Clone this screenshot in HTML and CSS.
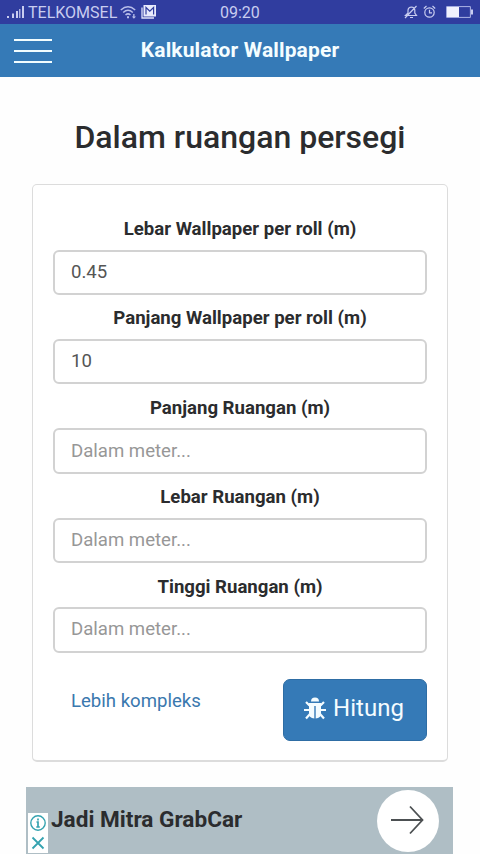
FILE: index.html
```html
<!DOCTYPE html>
<html lang="id">
<head>
<meta charset="utf-8">
<title>Kalkulator Wallpaper</title>
<link rel="stylesheet" href="styles.css">
</head>
<body>
<div class="status">
  <svg class="signal" width="19" height="14" viewBox="0 0 19 14"><path fill="#c9cdf0" d="M0 11h2v2H0zM5 8.500h2v4.500h-2zM9 6h2v7h-2zM15 1h2v12h-2z"/><path fill="#aab0e2" d="M12 4h1.500v9H12z"/></svg>
  <span class="carrier">TELKOMSEL</span>
  <svg class="wifi" width="17" height="14" viewBox="0 0 17 14" fill="none" stroke="#b9bfea" stroke-width="1.500"><path d="M.8 5Q8 -1.500 15.200 5M3.200 7.500Q8 3 12.800 7.500M5.500 10Q8 7.800 10.500 10"/><path fill="#b9bfea" stroke="none" d="M7 11.300h2v2H7zM13.200 9h1.300v2.500H16l-2.100 2.200-2-2.200h1.300z"/></svg>
  <svg class="mail" width="16" height="14" viewBox="0 0 16 14"><path d="M1 2.500v10.500h12" fill="none" stroke="#dfe2fa" stroke-width="1.300"/><path fill="#e8eafc" d="M2.500 0H15v11.500H2.500z"/><path d="M5 9.500V2.500l3.800 3.600L12.600 2.500v7" fill="none" stroke="#303d9d" stroke-width="1.200"/></svg>
  <span class="time">09:20</span>
  <svg class="bell" width="14" height="14" viewBox="0 0 14 14" fill="none" stroke="#c9cdf0" stroke-width="1.200"><path d="M1.500 10.500h11L10.800 8V5Q10.500 2.300 7.500 2 4.300 2.300 4 5v3zM6 12.500h3M1 13 12.500 1"/></svg>
  <svg class="alarm" width="13" height="14" viewBox="0 0 13 14" fill="none" stroke="#c9cdf0" stroke-width="1.200"><circle cx="6.500" cy="7.500" r="4.700"/><path d="M6.500 4.800v3H9M.8 3.500 3.500 1M9.500 1l2.700 2.500"/></svg>
  <svg class="battery" width="27" height="12" viewBox="0 0 27 12"><path d="M.6.600h23.800v10.800H.6z" fill="none" stroke="#aeb5e6"/><path d="M1 1h12v10H1z" fill="#f0f1fd"/><path d="M25 3.500h2v5h-2z" fill="#c9cdf0"/></svg>
</div>
<header class="bar">
  <div class="menu"><i></i><i></i><i></i></div>
  <h1 class="title">Kalkulator Wallpaper</h1>
</header>
<main class="main">
  <h2 class="heading">Dalam ruangan persegi</h2>
  <form class="card">
    <label class="field"><span>Lebar Wallpaper per roll (m)</span><input value="0.45"></label>
    <label class="field"><span>Panjang Wallpaper per roll (m)</span><input value="10"></label>
    <label class="field"><span>Panjang Ruangan (m)</span><input placeholder="Dalam meter..."></label>
    <label class="field"><span>Lebar Ruangan (m)</span><input placeholder="Dalam meter..."></label>
    <label class="field"><span>Tinggi Ruangan (m)</span><input placeholder="Dalam meter..."></label>
    <div class="actions">
      <a class="link">Lebih kompleks</a>
      <button class="submit" type="button">
        <svg width="22" height="23" viewBox="0 0 22 23"><path fill="#f4fcff" d="M7 4.500a4 4 0 0 1 8 0zM5 6h12v10.500q0 4.500-5.300 5V9h-1.400v12.500q-5.300-.5-5.300-5z"/><path d="M5.500 8.500 2 5M16.500 8.500 20 5M5.500 13H0M16.500 13H22M6 17l-4 4.500M16 17l4 4.500" stroke="#f4fcff" stroke-width="2.200"/></svg>
        <span>Hitung</span>
      </button>
    </div>
  </form>
</main>
<aside class="ad">
  <div class="choices">
    <svg width="18" height="18" viewBox="0 0 18 18" fill="none" stroke="#35a3b0"><circle cx="9" cy="9" r="7.200" stroke-width="1.400"/><path d="M9 4.500v2M7.500 8H9v5M7.300 13h3.500" stroke-width="1.700"/></svg>
    <svg width="18" height="18" viewBox="0 0 18 18" fill="none" stroke="#35a3b0" stroke-width="1.800"><path d="m3.500 3.500 11 11M14.500 3.500l-11 11"/></svg>
  </div>
  <span class="adtext">Jadi Mitra GrabCar</span>
  <div class="go"><svg width="34" height="30" viewBox="0 0 34 30" fill="none" stroke="#4c5052" stroke-width="1.800"><path d="M1 15h31M20 1.500 32.500 15 20 28.500"/></svg></div>
</aside>
</body>
</html>
```
FILE: styles.css
```css
* { box-sizing: border-box; }
body {
  margin: 0;
  height: 854px;
  overflow: hidden;
  background: #fefefe;
  color: #2b2c2e;
  font-family: Roboto, "Liberation Sans", sans-serif;
}
svg { display: block; flex: none; }
.status {
  display: flex;
  align-items: center;
  height: 24px;
  padding: 0 7px;
  background: #303d9f;
  color: #c9cdf0;
  font-size: 16px;
  line-height: 24px;
}
.signal { margin-right: 2px; }
.carrier { width: 90px; padding-top: 2px; white-space: nowrap; }
.wifi { margin-left: 2px; }
.mail { margin-left: 4px; }
.time { margin-left: 63px; padding-top: 2px; }
.bell { margin-left: auto; }
.alarm { margin-left: 5px; }
.battery { margin: 0 0 0 10px; }
.bar {
  display: grid;
  grid-template-columns: 52px 1fr 52px;
  align-items: center;
  height: 53px;
  background: #357ab7;
}
.menu { display: grid; gap: 9px; width: 38px; margin-left: 14px; }
.menu i { height: 2px; background: #f2fdff; }
.title {
  margin: 0;
  padding-bottom: 2px;
  color: #f4fdff;
  font-size: 21px;
  font-weight: 700;
  line-height: 24px;
  letter-spacing: .13px;
  text-align: center;
}
.main { padding: 40px 32px 0; }
.heading {
  margin: 0;
  height: 67px;
  font-size: 32px;
  font-weight: 500;
  line-height: 40px;
  text-align: center;
  white-space: nowrap;
}
.card {
  height: 578px;
  padding: 29px 20px 0;
  border: 1px solid #dcdcdc;
  border-bottom-width: 2px;
  border-radius: 5px;
  background: #fff;
}
.field { display: block; height: 89.4px; }
.field span {
  display: block;
  height: 35.500px;
  font-size: 18.600px;
  font-weight: 700;
  line-height: 31px;
  text-align: center;
}
.field input {
  display: block;
  width: 100%;
  height: 45.500px;
  padding: 0 16px 1px;
  border: 2px solid #d2d2d2;
  border-radius: 6px;
  background: #fff;
  color: #555;
  font: 18.600px Roboto, "Liberation Sans", sans-serif;
}
.field input::placeholder { color: #979797; }
.actions { display: flex; justify-content: space-between; margin-top: 18px; padding-left: 18px; }
.link { color: #3a78ae; font-size: 18.600px; line-height: 44px; }
.submit {
  display: flex;
  align-items: center;
  justify-content: center;
  gap: 7px;
  width: 144px;
  height: 62px;
  padding: 0 2px 3px 0;
  border: 1px solid #2e6da4;
  border-radius: 7px;
  background: #357ab7;
  color: #f4fcff;
  font: 24px Roboto, "Liberation Sans", sans-serif;
}
.ad {
  display: flex;
  width: 427px;
  height: 67px;
  margin: 25px 0 0 26px;
  background: #afbec5;
}
.choices {
  display: flex;
  flex-direction: column;
  align-items: center;
  gap: 2px;
  width: 20px;
  height: 40px;
  margin: 26px 0 0 2px;
  padding-top: 1px;
  background: #fff;
}
.adtext {
  margin: 19px 0 0 3px;
  font-size: 22.600px;
  font-weight: 700;
  line-height: 28px;
}
.go {
  display: flex;
  align-items: center;
  justify-content: center;
  width: 62px;
  height: 62px;
  margin: 3px 14px 0 auto;
  padding: 0 2px 2px 0;
  border-radius: 50%;
  background: #fff;
}
```
